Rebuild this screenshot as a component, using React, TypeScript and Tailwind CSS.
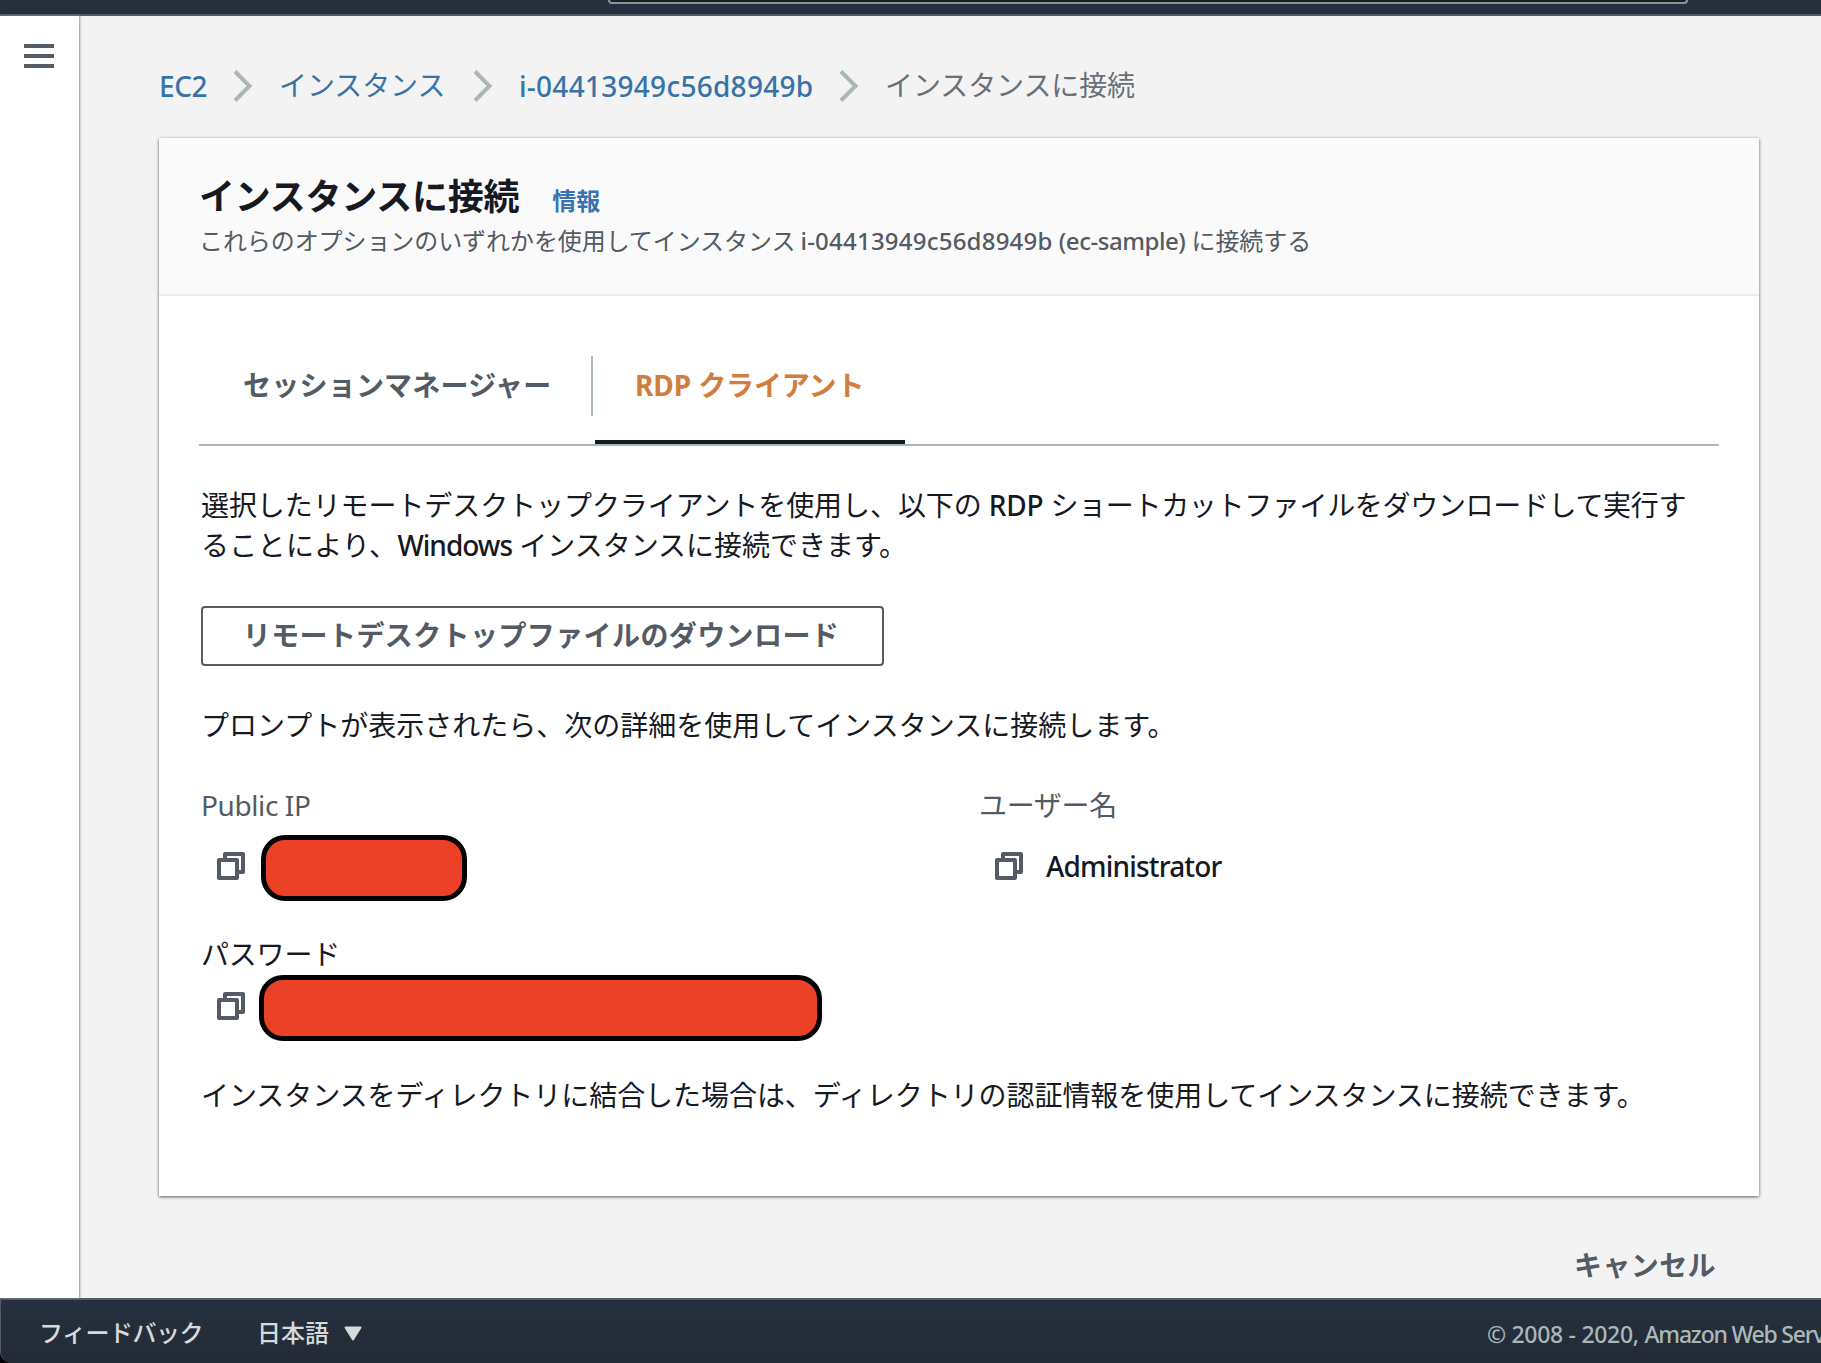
const Chevron = () => (
  <svg className="shrink-0" width="20" height="32" viewBox="0 0 20 32" fill="none" stroke="#aab7b8" strokeWidth="4">
    <path d="M2 1.5 L16.5 16 L2 30.5" />
  </svg>
);

const CopyIcon = () => (
  <svg className="shrink-0" width="28" height="28" viewBox="0 0 28 28" fill="none" stroke="#545b64" strokeWidth="4" strokeLinejoin="round">
    <path d="M2 8 H20 V26 H2 Z" />
    <path d="M8 8 V2 H26 V20 H20" />
  </svg>
);

export default function App() {
  return (
    <div className="flex h-[1363px] w-[1821px] flex-col overflow-hidden whitespace-nowrap bg-[#f3f3f3] font-['Noto_Sans','Noto_Sans_CJK_JP',sans-serif] text-[28px] leading-10 text-[#16191f]">
      <header className="h-4 shrink-0 border-b-2 border-[#545b64] bg-[#252f3e]">
        <div className="ml-[608px] h-1 w-[1080px] rounded-b-[4px] border-2 border-t-0 border-[#879596] bg-[#1a2027]" />
      </header>

      <div className="flex min-h-0 grow">
        <aside className="z-10 w-[79px] shrink-0 bg-white shadow-[1px_0_2px_#8a939b]">
          <div className="ml-6 mt-7 flex w-[30px] flex-col gap-1.5">
            <div className="h-1 bg-[#545b64]" />
            <div className="h-1 bg-[#545b64]" />
            <div className="h-1 bg-[#545b64]" />
          </div>
        </aside>

        <main className="flex grow flex-col pl-20">
          <nav className="flex h-[122px] shrink-0 items-center pt-[18px] text-[#3873a8]">
            <a className="w-[74px] font-medium tracking-[-0.4px]">EC2</a>
            <Chevron />
            <a className="ml-[26px] w-[194px] pb-0.5 tracking-[-0.1px]">インスタンス</a>
            <Chevron />
            <a className="ml-[26px] w-[320px] font-medium tracking-[0.27px]">i-04413949c56d8949b</a>
            <Chevron />
            <span className="ml-[26px] pb-0.5 tracking-[-0.1px] text-[#687078]">インスタンスに接続</span>
          </nav>

          <section className="flex h-[1058px] w-[1600px] shrink-0 flex-col bg-white shadow-[0_1px_3px_#545b64]">
            <div className="h-[158px] shrink-0 border-b-2 border-[#eaeded] bg-[#fafafa] px-10 pt-[35px]">
              <h1 className="flex items-center text-[36px] font-bold leading-[48px] tracking-[-0.25px]">
                インスタンスに接続
                <a className="ml-[33px] pt-2 text-[24px] leading-10 tracking-normal text-[#3873b0]">情報</a>
              </h1>
              <p className="text-[24px] tracking-[-0.08px] text-[#545b64]">
                これらのオプションのいずれかを使用してインスタンス{" "}
                <span className="-ml-px font-medium tracking-[0.22px]">i-04413949c56d8949b</span>{" "}
                <span className="font-medium tracking-[-0.45px]">(ec-sample)</span> に接続する
              </p>
            </div>

            <div className="flex flex-col px-10 pt-[60px]">
              <div className="flex h-[90px] border-b-2 border-[#aab7b8] font-bold text-[#545b64]">
                <div className="h-[60px] w-[394px] border-r-2 border-[#aab7b8] pl-11 pt-[9px] tracking-[0.22px]">
                  セッションマネージャー
                </div>
                <div className="ml-0.5 h-[88px] w-[310px] border-b-4 border-[#16191f] pl-10 pt-[9px] tracking-[-0.1px] text-[#d17d3d]">
                  RDP クライアント
                </div>
              </div>

              <p className="ml-0.5 mt-[39px]">
                <span className="tracking-[-0.08px]">選択したリモートデスクトップクライアントを使用し、以下の </span>
                <span className="font-medium tracking-[-0.3px]">RDP</span>{" "}
                <span className="tracking-[-0.33px]">ショートカットファイルをダウンロードして実行す</span>
                <br />
                <span className="tracking-[0.3px]">ることにより、</span>
                <span className="font-medium tracking-[-1px]">Windows</span>{" "}
                <span className="tracking-[-0.02px]">インスタンスに接続できます。</span>
              </p>

              <button className="ml-0.5 mt-[41px] h-[60px] w-[683px] rounded-[4px] border-2 border-[#545b64] pb-0.5 pr-[3px] font-bold tracking-[0.4px] text-[#545b64]">
                リモートデスクトップファイルのダウンロード
              </button>

              <p className="ml-0.5 mt-[39px]">プロンプトが表示されたら、次の詳細を使用してインスタンスに接続します。</p>

              <div className="ml-0.5 mt-10 grid grid-cols-[779px_1fr]">
                <div>
                  <div className="tracking-[-0.4px] text-[#545b64]">Public IP</div>
                  <div className="mt-2 flex h-[66px] items-center pl-4">
                    <CopyIcon />
                    <div className="ml-4 mt-[3px] h-[66px] w-[206px] shrink-0 rounded-[24px] border-[5px] border-black bg-[#eb4127]" />
                  </div>
                </div>
                <div>
                  <div className="-ml-px tracking-[-0.3px] text-[#545b64]">ユーザー名</div>
                  <div className="mt-2 flex h-[66px] items-center pl-[15px]">
                    <CopyIcon />
                    <span className="ml-[23px] pb-px font-medium tracking-[-0.82px]">Administrator</span>
                  </div>
                </div>
              </div>

              <div className="ml-0.5 mt-[35px]">
                <div className="tracking-[-0.2px]">パスワード</div>
                <div className="flex h-16 items-center pl-4">
                  <CopyIcon />
                  <div className="ml-[14px] mt-1 h-[66px] w-[563px] shrink-0 rounded-[24px] border-[5px] border-black bg-[#eb4127]" />
                </div>
              </div>

              <p className="ml-0.5 mt-[37px] tracking-[-0.05px]">
                インスタンスをディレクトリに結合した場合は、ディレクトリの認証情報を使用してインスタンスに接続できます。
              </p>
            </div>
          </section>

          <div className="mt-[49px] flex w-[1600px] justify-end pr-[43px] font-bold tracking-[0.4px] text-[#545b64]">
            <button>キャンセル</button>
          </div>
        </main>
      </div>

      <footer className="h-[65px] shrink-0 bg-black">
        <div className="flex h-[65px] items-center rounded-bl-[12px] border-l border-t-2 border-[#545b64] bg-linear-to-b from-[#262f3e] to-[#222b36] pt-1 text-[24px] font-medium text-[#d5dbdb]">
          <span className="ml-[38px] w-[218px] shrink-0 pb-0.5 tracking-[-0.5px]">フィードバック</span>
          <span className="shrink-0 pb-0.5">日本語</span>
          <svg className="ml-[15px] shrink-0" width="18" height="15" viewBox="0 0 18 15" fill="#d5dbdb" stroke="#d5dbdb" strokeWidth="2" strokeLinejoin="round">
            <path d="M1.5 1.5 H16.5 L9 13.5 Z" />
          </svg>
          <span className="ml-[1125px] shrink-0 text-[23px] tracking-[-1.2px] text-[#aab7b8]">
            <span className="tracking-[-0.3px]">© 2008 - 2020, </span>Amazon Web Serv
          </span>
        </div>
      </footer>
    </div>
  );
}
